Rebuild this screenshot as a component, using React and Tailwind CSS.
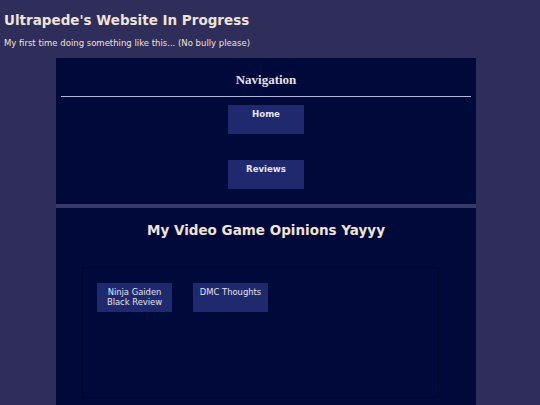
export default function App() {
  const navLinks = ["Home", "Reviews"];
  const reviews = [
    ["Ninja Gaiden", "Black Review"],
    ["DMC Thoughts"],
  ];

  return (
    <div className="min-h-screen bg-[#2f2d5a] px-1 pt-[11px] font-['DejaVu_Sans',Verdana,sans-serif] text-[#efe2d6]">
      <h1 className="text-[13.5px] leading-[18px] font-bold">Ultrapede&apos;s Website In Progress</h1>
      <p className="mt-[9px] text-[8.5px] leading-[10px]">My first time doing something like this... (No bully please)</p>

      <div className="mt-[10px] ml-[52px] flex w-[420px] flex-col gap-[4px] bg-[#3a3868]">
        <nav className="bg-[#000a3a] px-[5px] pt-[14px] pb-[15px]">
          <h2 className="text-center font-['Liberation_Serif',serif] text-[13px] leading-[15px] font-bold text-[#e4e0ea]">
            Navigation
          </h2>
          <div className="mt-[9px] h-px bg-[#b4b4dc]" />
          <div className="mt-[8px] flex flex-col items-center gap-[26px]">
            {navLinks.map((label) => (
              <a
                key={label}
                className="block h-[29px] w-[76px] bg-[#1f2a6e] pt-[4px] text-center text-[8.6px] leading-[10px] font-bold text-[#e8e2ee]"
              >
                {label}
              </a>
            ))}
          </div>
        </nav>

        <section className="h-[200px] bg-[#000a3a] pt-[13px]">
          <h2 className="text-center text-[13.5px] leading-[18px] font-bold text-[#efe2d6]">My Video Game Opinions Yayyy</h2>
          <div className="mt-[28px] ml-[26px] h-[131px] w-[357px] border border-[#00052c] px-[14px] pt-[15px]">
            <div className="flex gap-[21px]">
              {reviews.map((lines) => (
                <a
                  key={lines[0]}
                  className="block h-[29px] w-[75px] bg-[#1f2a6e] pt-[4px] text-center text-[8.4px] leading-[10px] text-[#e4e0ec]"
                >
                  {lines.map((l) => (
                    <span key={l} className="block">
                      {l}
                    </span>
                  ))}
                </a>
              ))}
            </div>
          </div>
        </section>
      </div>
    </div>
  );
}
